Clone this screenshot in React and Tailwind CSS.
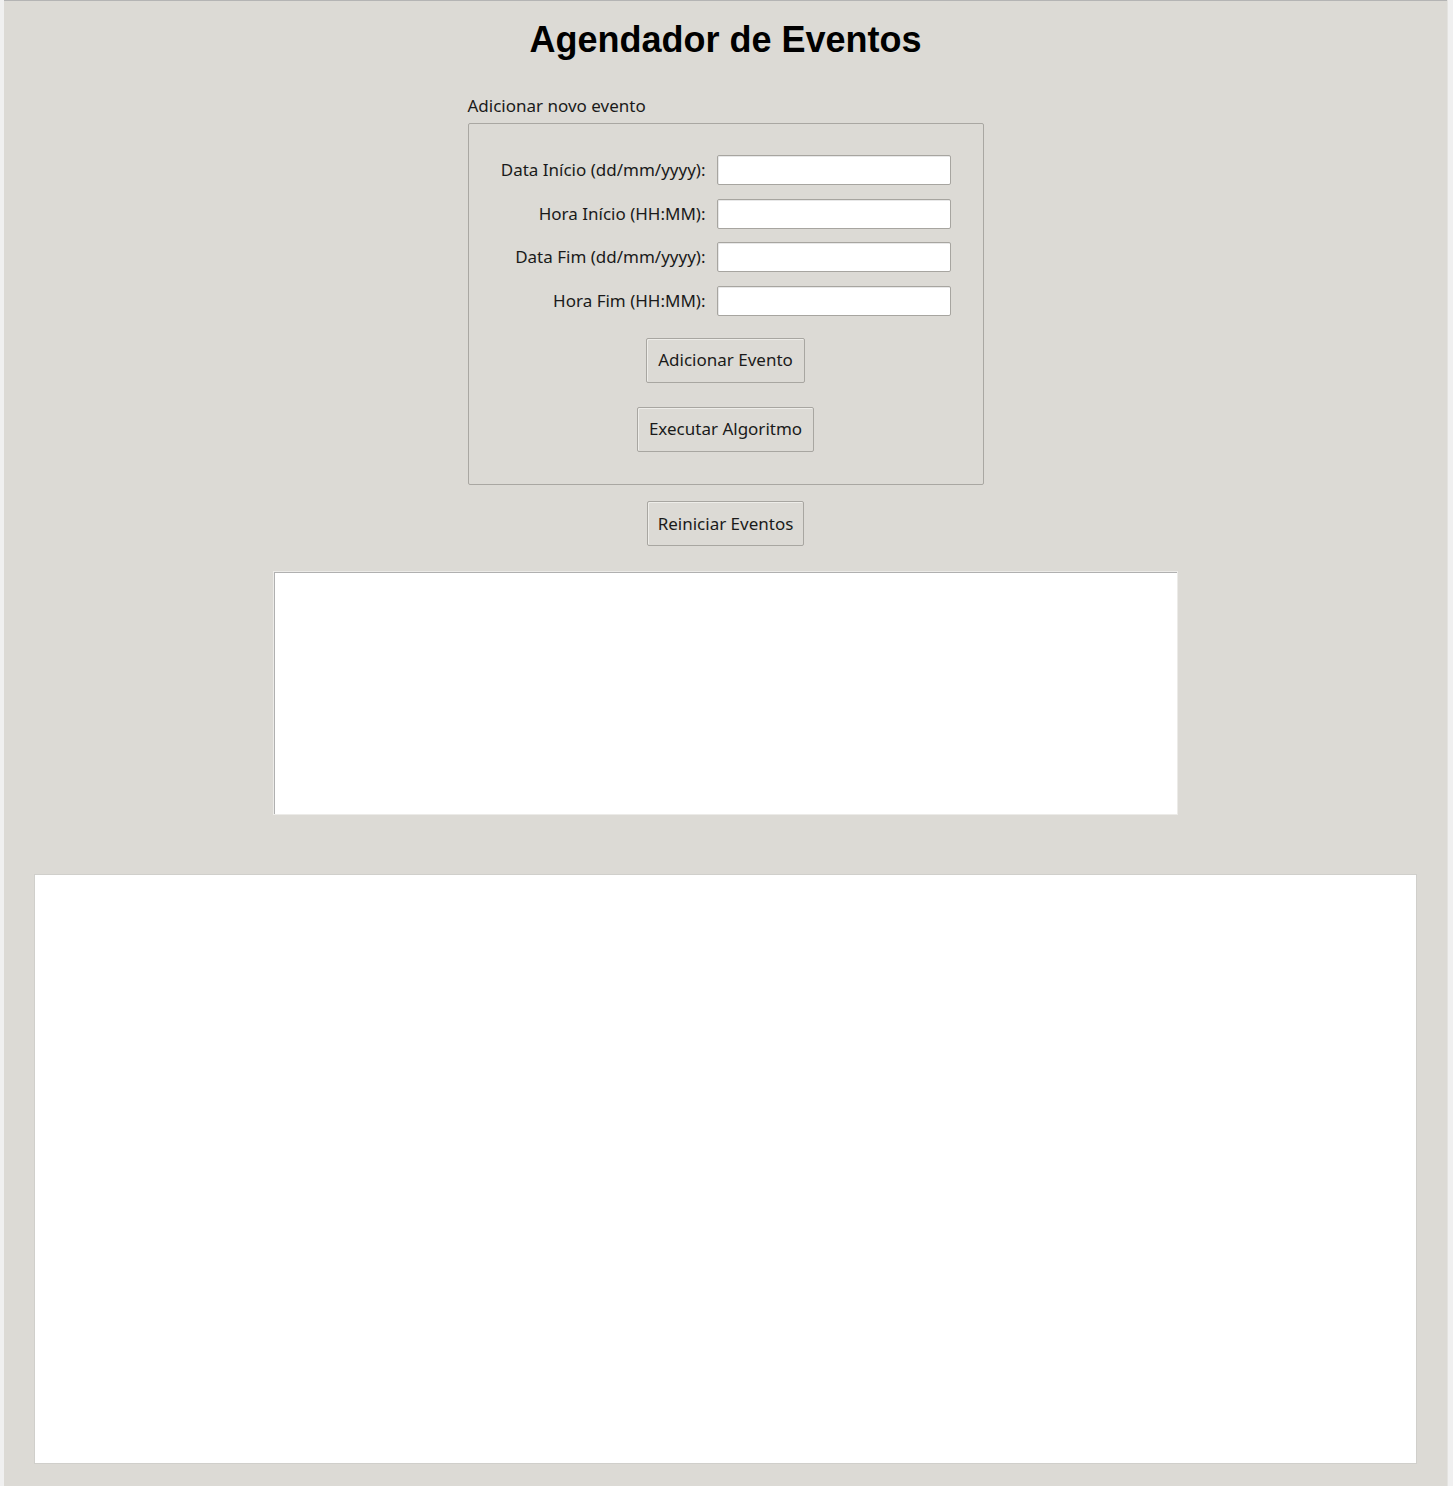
export default function App() {
  const fields = [
    'Data Início (dd/mm/yyyy):',
    'Hora Início (HH:MM):',
    'Data Fim (dd/mm/yyyy):',
    'Hora Fim (HH:MM):',
  ];

  const btn =
    'h-[45px] bg-[#dcdad5] border border-[#a8a6a1] rounded-[2px] text-[17px] text-[#1a1a1a] shadow-[inset_1px_1px_0_#eeede9]';

  return (
    <div className="flex w-full h-[1486px] bg-[#f0f0f0] font-['Noto_Sans',sans-serif]">
      <div className="w-[4px] shrink-0 bg-[#f0f0f0]" />
      <main className="flex-1 flex flex-col items-center bg-[#dcdad5] border-t border-[#b4b4b4]">
        <h1 className="mt-[17px] h-[44px] text-[36px] leading-[44px] font-bold text-black font-['Liberation_Sans',Arial,sans-serif]">
          Agendador de Eventos
        </h1>

        <section className="mt-[33px] w-[516px]">
          <div className="h-[22px] leading-[22px] text-[17px] text-[#1a1a1a] mb-[6px]">Adicionar novo evento</div>
          <div className="h-[362px] border border-[#a9a7a2] rounded-[2px] flex flex-col items-center pt-[31px]">
            <div className="flex flex-col gap-[13.5px] w-full">
              {fields.map((f) => (
                <div key={f} className="flex items-center">
                  <label className="w-[248px] pr-[11px] text-right text-[17px] text-[#1a1a1a] whitespace-nowrap">{f}</label>
                  <input
                    aria-label={f}
                    className="w-[234px] h-[30px] bg-white border border-[#a7a5a0] rounded-[2px] outline-none shadow-[inset_1px_1px_0_#e8e8e8]"
                  />
                </div>
              ))}
            </div>
            <button className={`${btn} mt-[22px] w-[159px]`}>Adicionar Evento</button>
            <button className={`${btn} mt-[24px] w-[177px]`}>Executar Algoritmo</button>
          </div>
        </section>

        <button className={`${btn} mt-[16px] w-[157px]`}>Reiniciar Eventos</button>

        <div className="mt-[25px] w-[905px] h-[244px] bg-white border border-[#ecebe8] shadow-[inset_1px_1px_0_#b0b0b0]" />

        <div className="mt-[59px] w-[1383px] h-[590px] bg-white border border-[#d0cfcb]" />
      </main>
      <div className="w-[6px] shrink-0 bg-[#f0f0f0] border-l border-[#e4e3e0]" />
    </div>
  );
}
